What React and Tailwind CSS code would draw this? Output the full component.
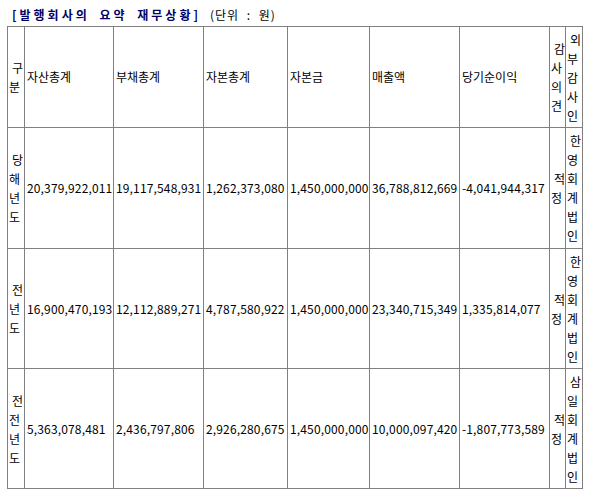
const rows = [
  {
    label: "당해년도",
    values: ["20,379,922,011", "19,117,548,931", "1,262,373,080", "1,450,000,000", "36,788,812,669", "-4,041,944,317"],
    opinion: "적정",
    auditor: "한영회계법인",
  },
  {
    label: "전년도",
    values: ["16,900,470,193", "12,112,889,271", "4,787,580,922", "1,450,000,000", "23,340,715,349", "1,335,814,077"],
    opinion: "적정",
    auditor: "한영회계법인",
  },
  {
    label: "전전년도",
    values: ["5,363,078,481", "2,436,797,806", "2,926,280,675", "1,450,000,000", "10,000,097,420", "-1,807,773,589"],
    opinion: "적정",
    auditor: "삼일회계법인",
  },
];

const headers = ["자산총계", "부채총계", "자본총계", "자본금", "매출액", "당기순이익"];

// one character per line, first line pushed in a little like the original
function VText({ text }) {
  return (
    <div className="flex flex-col">
      {text.split("").map((ch, i) => (
        <span key={i} className={"h-[19px] leading-[19px] " + (i === 0 ? "pl-[3px]" : "")}>
          {ch}
        </span>
      ))}
    </div>
  );
}

function Cell({ children, narrow }) {
  return (
    <div className={"bg-white flex items-center whitespace-nowrap " + (narrow ? "pl-[1px]" : "pl-[2px]")}>
      {children}
    </div>
  );
}

export default function App() {
  return (
    <div className="bg-white w-[590px] h-[498px] pl-[7px] pt-[4px] font-['Noto_Sans_CJK_KR',sans-serif] text-[12px] text-black">
      {/* Title */}
      <div className="h-[22px] flex items-center pl-[5px]">
        <span className="font-bold text-[#000066] tracking-[3px] whitespace-pre [word-spacing:4px]">[발행회사의 요약 재무상황]</span>
        <span className="ml-[9px] whitespace-pre tracking-[1px] [word-spacing:4px]">(단위 : 원)</span>
      </div>

      {/* Table */}
      <div className="grid w-fit grid-cols-[16px_88px_89px_83px_81px_89px_89px_15px_16px] grid-rows-[100px_120px_119px_119px] gap-px bg-[#808080] p-px">
        <Cell narrow><VText text="구분" /></Cell>
        {headers.map((h) => (
          <Cell key={h}>{h}</Cell>
        ))}
        <Cell narrow><VText text="감사의견" /></Cell>
        <Cell narrow><VText text="외부감사인" /></Cell>

        {rows.map((r) => (
          <>
            <Cell narrow key={r.label}><VText text={r.label} /></Cell>
            {r.values.map((v, i) => (
              <Cell key={r.label + i}>
                <span className="tracking-[0.15px]">{v}</span>
              </Cell>
            ))}
            <Cell narrow><VText text={r.opinion} /></Cell>
            <Cell narrow><VText text={r.auditor} /></Cell>
          </>
        ))}
      </div>
    </div>
  );
}
